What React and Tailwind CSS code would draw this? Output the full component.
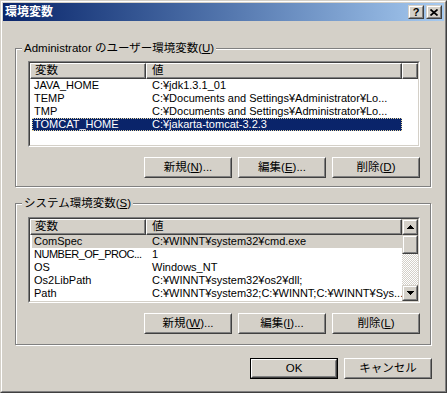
import React from "react";

function Btn({ children, def = false }) {
  const inner = (
    <div className="h-full w-full border border-t-white border-l-white border-r-[#404040] border-b-[#404040] bg-[#d4d0c8]">
      <div className="h-full w-full border border-t-[#d4d0c8] border-l-[#d4d0c8] border-r-[#808080] border-b-[#808080] flex items-center justify-center text-[11.5px] leading-none text-black whitespace-nowrap">
        {children}
      </div>
    </div>
  );
  if (def) {
    return <div className="h-[21px] w-[88px] border border-black">{inner}</div>;
  }
  return <div className="h-[21px] w-[88px]">{inner}</div>;
}

function Raised({ className, children }) {
  return (
    <div className={"border border-t-[#d4d0c8] border-l-[#d4d0c8] border-r-[#404040] border-b-[#404040] bg-[#d4d0c8] " + className}>
      <div className="h-full w-full border border-t-white border-l-white border-r-[#808080] border-b-[#808080] flex items-center justify-center">
        {children}
      </div>
    </div>
  );
}

function HeaderCell({ className, children }) {
  return (
    <div className={"h-full bg-[#d4d0c8] border border-t-white border-l-white border-r-[#404040] border-b-[#404040] shadow-[inset_-1px_-1px_0_#808080] flex items-center text-[11.5px] leading-none text-black " + className}>
      {children}
    </div>
  );
}

function Row({ a, b, sel, tight }) {
  let cls = "text-black";
  if (sel === "active") cls = "bg-[#0a246a] text-white outline outline-1 outline-dotted outline-[#e8d9a0] -outline-offset-1";
  if (sel === "inactive") cls = "bg-[#d4d0c8] text-black";
  return (
    <div className={"ml-[2px] w-[370px] h-[13px] flex text-[11px] leading-[13px] whitespace-nowrap " + cls}>
      <div className={"w-[114px] pl-[2px] overflow-hidden " + (tight ? "tracking-[-0.5px]" : "")}>{a}</div>
      <div className="flex-1 pl-[6px] overflow-hidden">{b}</div>
    </div>
  );
}

function ListHeader({ filler }) {
  return (
    <div className="h-[16px] flex shrink-0">
      <HeaderCell className="w-[116px] pl-[4px]">変数</HeaderCell>
      <HeaderCell className="w-[256px] pl-[5px]">値</HeaderCell>
      {filler && <HeaderCell className="flex-1" />}
    </div>
  );
}

function ListFrame({ children }) {
  return (
    <div className="w-[392px] h-[86px] border border-t-[#808080] border-l-[#808080] border-b-white border-r-white">
      <div className="h-full w-full border border-t-[#404040] border-l-[#404040] border-b-[#d4d0c8] border-r-[#d4d0c8] bg-white flex overflow-hidden">
        {children}
      </div>
    </div>
  );
}

function Group({ label, h, pt, children }) {
  return (
    <div className={"relative w-[416px] border border-[#808080] shadow-[inset_1px_1px_0_#fff,1px_1px_0_#fff] pl-[12px] " + h + " " + pt}>
      <div className="absolute left-[6px] top-[-8px] px-[2px] bg-[#d4d0c8] text-[11.5px] leading-[14px] text-black whitespace-nowrap">
        {label}
      </div>
      {children}
    </div>
  );
}

function UpArrow() {
  return (
    <svg width="7" height="4" viewBox="0 0 7 4" shapeRendering="crispEdges">
      <polygon points="3.5,0 7,4 0,4" fill="#000" />
    </svg>
  );
}
function DownArrow() {
  return (
    <svg width="7" height="4" viewBox="0 0 7 4" shapeRendering="crispEdges">
      <polygon points="0,0 7,0 3.5,4" fill="#000" />
    </svg>
  );
}

export default function App() {
  return (
    <div className="w-[447px] h-[393px] bg-[#d4d0c8] font-['Liberation_Sans','Noto_Sans_CJK_JP',sans-serif] border border-t-[#d4d0c8] border-l-[#d4d0c8] border-r-[#404040] border-b-[#404040] flex flex-col">
      <div className="flex-1 border border-t-white border-l-white border-r-[#808080] border-b-[#808080] p-[1px] flex flex-col">
        {/* Title bar */}
        <div className="h-[18px] shrink-0 bg-linear-to-r from-[#0a246a] to-[#a6caf0] flex items-center pl-[2px] pr-[2px]">
          <div className="flex-1 text-white font-bold text-[12px] leading-none">環境変数</div>
          <Raised className="w-[16px] h-[14px]">
            <span className="text-[11px] font-bold leading-none text-black">?</span>
          </Raised>
          <Raised className="w-[16px] h-[14px] ml-[2px]">
            <svg width="8" height="7" viewBox="0 0 8 7">
              <path d="M0.5 0.5 L7.5 6.5 M7.5 0.5 L0.5 6.5" stroke="#000" strokeWidth="1.7" />
            </svg>
          </Raised>
        </div>

        <div className="pl-[12px] flex flex-col">
          {/* Group 1 */}
          <div className="mt-[27px]">
            <Group
              label={<span>Administrator のユーザー環境変数(<u>U</u>)</span>}
              h="h-[139px]"
              pt="pt-[12px]"
            >
              <ListFrame>
                <div className="flex flex-col w-full">
                  <ListHeader filler />
                  <Row a="JAVA_HOME" b="C:¥jdk1.3.1_01" />
                  <Row a="TEMP" b="C:¥Documents and Settings¥Administrator¥Lo..." />
                  <Row a="TMP" b="C:¥Documents and Settings¥Administrator¥Lo..." />
                  <Row a="TOMCAT_HOME" b="C:¥jakarta-tomcat-3.2.3" sel="active" />
                </div>
              </ListFrame>
              <div className="mt-[10px] w-[392px] flex justify-end gap-[6px]">
                <Btn>新規(<u>N</u>)...</Btn>
                <Btn>編集(<u>E</u>)...</Btn>
                <Btn>削除(<u>D</u>)</Btn>
              </div>
            </Group>
          </div>

          {/* Group 2 */}
          <div className="mt-[16px]">
            <Group label={<span>システム環境変数(<u>S</u>)</span>} h="h-[142px]" pt="pt-[13px]">
              <ListFrame>
                <div className="flex flex-col w-[372px]">
                  <ListHeader />
                  <Row a="ComSpec" b="C:¥WINNT¥system32¥cmd.exe" sel="inactive" />
                  <Row a="NUMBER_OF_PROC..." b="1" tight />
                  <Row a="OS" b="Windows_NT" />
                  <Row a="Os2LibPath" b="C:¥WINNT¥system32¥os2¥dll;" />
                  <Row a="Path" b="C:¥WINNT¥system32;C:¥WINNT;C:¥WINNT¥Sys..." />
                </div>
                <div className="w-[16px] h-full flex flex-col">
                  <Raised className="w-[16px] h-[16px] shrink-0">
                    <UpArrow />
                  </Raised>
                  <Raised className="w-[16px] h-[19px] shrink-0" />
                  <div className="flex-1 bg-[repeating-conic-gradient(#d4d0c8_0%_25%,#ffffff_0%_50%)] bg-[length:2px_2px]" />
                  <Raised className="w-[16px] h-[16px] shrink-0">
                    <DownArrow />
                  </Raised>
                </div>
              </ListFrame>
              <div className="mt-[10px] w-[392px] flex justify-end gap-[6px]">
                <Btn>新規(<u>W</u>)...</Btn>
                <Btn>編集(<u>I</u>)...</Btn>
                <Btn>削除(<u>L</u>)</Btn>
              </div>
            </Group>
          </div>

          {/* OK / Cancel */}
          <div className="mt-[13px] w-[417px] flex justify-end gap-[6px]">
            <Btn def>OK</Btn>
            <Btn>キャンセル</Btn>
          </div>
        </div>
      </div>
    </div>
  );
}
